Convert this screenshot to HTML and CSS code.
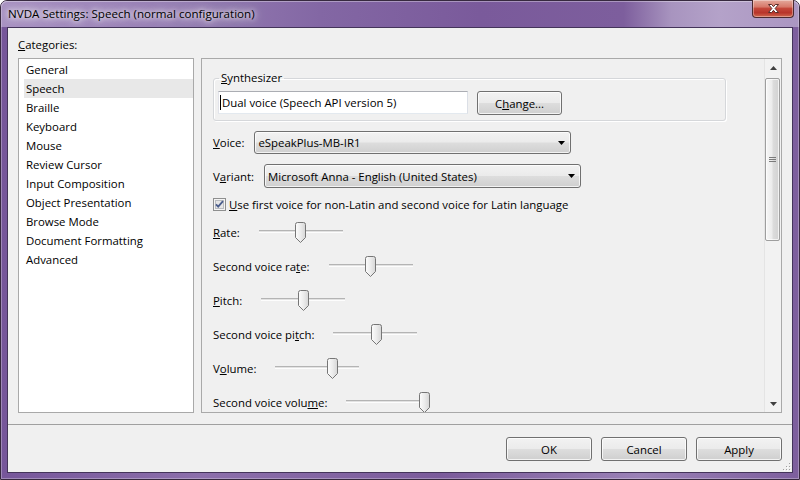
FILE: index.html
```html
<!DOCTYPE html>
<html>
<head>
<meta charset="utf-8">
<title>NVDA Settings</title>
<link rel="stylesheet" href="styles.css">
</head>
<body>
<div class="window">
  <div class="titlebar">
    <span class="title">NVDA Settings: Speech (normal configuration)</span>
    <div class="close">
      <svg width="13" height="11" viewBox="0 0 13 11"><path d="M1.5 1.5h3.2l1.8 2.2 1.8-2.2h3.2l-3.4 4 3.4 4h-3.2l-1.8-2.2-1.8 2.2h-3.2l3.4-4z" fill="#fff" stroke="#5b2e2a" stroke-width="1" stroke-linejoin="round"/></svg>
    </div>
  </div>
  <div class="client">
    <div class="main">
      <div class="cat-label"><u>C</u>ategories:</div>
      <ul class="catlist">
        <li>General</li>
        <li class="sel">Speech</li>
        <li>Braille</li>
        <li>Keyboard</li>
        <li>Mouse</li>
        <li>Review Cursor</li>
        <li>Input Composition</li>
        <li>Object Presentation</li>
        <li>Browse Mode</li>
        <li>Document Formatting</li>
        <li>Advanced</li>
      </ul>
      <div class="panel">
        <div class="panel-body">
          <fieldset class="group">
            <legend><u>S</u>ynthesizer</legend>
            <div class="synth-row">
              <div class="textbox"><span class="caret"></span>Dual voice (Speech API version 5)</div>
              <button class="btn change">C<u>h</u>ange...</button>
            </div>
          </fieldset>
          <div class="field-row voice">
            <span class="lbl"><u>V</u>oice:</span>
            <div class="combo"><span>eSpeakPlus-MB-IR1</span><svg class="arrow" width="7" height="4" viewBox="0 0 7 4"><path d="M0 0h7L3.5 4z" fill="#000"/></svg></div>
          </div>
          <div class="field-row variant">
            <span class="lbl">V<u>a</u>riant:</span>
            <div class="combo"><span>Microsoft Anna - English (United States)</span><svg class="arrow" width="7" height="4" viewBox="0 0 7 4"><path d="M0 0h7L3.5 4z" fill="#000"/></svg></div>
          </div>
          <div class="check-row">
            <span class="chk"><svg width="13" height="13" viewBox="0 0 13 13"><rect x="0.5" y="0.5" width="12" height="12" fill="#f4f4f4" stroke="#8e8f8f"/><rect x="2.5" y="2.5" width="8" height="8" fill="#e6e6e6" stroke="#b9bcc0"/><path d="M3 6.3l2.2 2.4L10 3.2" fill="none" stroke="#4a5d8c" stroke-width="1.8"/></svg></span>
            <span><u>U</u>se first voice for non-Latin and second voice for Latin language</span>
          </div>
          <div class="slider-row first">
            <span class="lbl"><u>R</u>ate:</span>
            <div class="slider"><div class="track"></div><svg class="thumb" style="--v:0.5" width="11" height="21" viewBox="0 0 11 21"><defs><linearGradient id="tg" x1="0" y1="0" x2="1" y2="0"><stop offset="0" stop-color="#fdfdfd"/><stop offset="0.5" stop-color="#ececec"/><stop offset="1" stop-color="#d6d6d6"/></linearGradient></defs><path d="M0.5 2.5Q0.5 0.5 2.5 0.5H8.5Q10.5 0.5 10.5 2.5V15.5L5.5 20.5L0.5 15.5Z" fill="url(#tg)" stroke="#767676"/></svg></div>
          </div>
          <div class="slider-row">
            <span class="lbl">Second voice ra<u>t</u>e:</span>
            <div class="slider"><div class="track"></div><svg class="thumb" style="--v:0.5" width="11" height="21" viewBox="0 0 11 21"><path d="M0.5 2.5Q0.5 0.5 2.5 0.5H8.5Q10.5 0.5 10.5 2.5V15.5L5.5 20.5L0.5 15.5Z" fill="url(#tg)" stroke="#767676"/></svg></div>
          </div>
          <div class="slider-row">
            <span class="lbl"><u>P</u>itch:</span>
            <div class="slider"><div class="track"></div><svg class="thumb" style="--v:0.5" width="11" height="21" viewBox="0 0 11 21"><path d="M0.5 2.5Q0.5 0.5 2.5 0.5H8.5Q10.5 0.5 10.5 2.5V15.5L5.5 20.5L0.5 15.5Z" fill="url(#tg)" stroke="#767676"/></svg></div>
          </div>
          <div class="slider-row">
            <span class="lbl">Second voice pi<u>t</u>ch:</span>
            <div class="slider"><div class="track"></div><svg class="thumb" style="--v:0.52" width="11" height="21" viewBox="0 0 11 21"><path d="M0.5 2.5Q0.5 0.5 2.5 0.5H8.5Q10.5 0.5 10.5 2.5V15.5L5.5 20.5L0.5 15.5Z" fill="url(#tg)" stroke="#767676"/></svg></div>
          </div>
          <div class="slider-row">
            <span class="lbl">V<u>o</u>lume:</span>
            <div class="slider"><div class="track"></div><svg class="thumb" style="--v:0.71" width="11" height="21" viewBox="0 0 11 21"><path d="M0.5 2.5Q0.5 0.5 2.5 0.5H8.5Q10.5 0.5 10.5 2.5V15.5L5.5 20.5L0.5 15.5Z" fill="url(#tg)" stroke="#767676"/></svg></div>
          </div>
          <div class="slider-row">
            <span class="lbl">Second voice volu<u>m</u>e:</span>
            <div class="slider"><div class="track"></div><svg class="thumb" style="--v:1" width="11" height="21" viewBox="0 0 11 21"><path d="M0.5 2.5Q0.5 0.5 2.5 0.5H8.5Q10.5 0.5 10.5 2.5V15.5L5.5 20.5L0.5 15.5Z" fill="url(#tg)" stroke="#767676"/></svg></div>
          </div>
        </div>
        <div class="vscroll">
          <div class="sb-btn"><svg width="7" height="4" viewBox="0 0 7 4"><path d="M0 4h7L3.5 0z" fill="#404040"/></svg></div>
          <div class="sb-thumb"><svg width="7" height="5" viewBox="0 0 7 5"><path d="M0 0.5h7M0 2.5h7M0 4.5h7" stroke="#7a7a7a" stroke-width="1"/></svg></div>
          <div class="sb-space"></div>
          <div class="sb-btn"><svg width="7" height="4" viewBox="0 0 7 4"><path d="M0 0h7L3.5 4z" fill="#404040"/></svg></div>
        </div>
      </div>
    </div>
    <div class="sep"></div>
    <div class="buttons">
      <button class="btn">OK</button>
      <button class="btn">Cancel</button>
      <button class="btn">Apply</button>
    </div>
    <svg class="grip" width="8" height="8" viewBox="0 0 8 8"><g fill="#fff"><rect x="7" y="7" width="1" height="1"/><rect x="4" y="7" width="1" height="1"/><rect x="1" y="7" width="1" height="1"/><rect x="7" y="4" width="1" height="1"/><rect x="4" y="4" width="1" height="1"/><rect x="7" y="1" width="1" height="1"/></g><g fill="#a0a0a0"><rect x="6" y="6" width="1" height="1"/><rect x="3" y="6" width="1" height="1"/><rect x="0" y="6" width="1" height="1"/><rect x="6" y="3" width="1" height="1"/><rect x="3" y="3" width="1" height="1"/><rect x="6" y="0" width="1" height="1"/></g></svg>
  </div>
</div>
</body>
</html>
```

FILE: styles.css
```css
* { box-sizing: border-box; }
html, body { margin: 0; padding: 0; }
body {
  width: 800px;
  height: 480px;
  background: #ffffff;
  font-family: "Open Sans", "Noto Sans", sans-serif;
  font-size: 11.4px;
  color: #000;
  overflow: hidden;
}
u { text-decoration: underline; text-underline-offset: 1px; text-decoration-thickness: 1px; }

.window {
  width: 800px;
  height: 480px;
  display: flex;
  flex-direction: column;
  border: 1px solid #37293f;
  border-radius: 7px 7px 0 0;
  background: linear-gradient(90deg, #76569a 0%, #8c6fab 25%, #7b5b9b 55%, #9a81b6 80%, #7d5e9d 100%);
  box-shadow: inset 0 0 0 1px rgba(255,255,255,0.3);
  position: relative;
}

.titlebar {
  height: 26px;
  flex: none;
  position: relative;
  border-radius: 6px 6px 0 0;
  background: linear-gradient(90deg, #a892c2 0%, #9880b5 20%, #8367a4 40%, #7a5a9b 60%, #7d5e9d 78%, #a894bf 84%, #b4a2c9 90%, #ab96c2 100%);
  box-shadow: inset 0 1px 0 rgba(255,255,255,0.35), inset 1px 0 0 rgba(255,255,255,0.25), inset -1px 0 0 rgba(255,255,255,0.25);
}
.title {
  display: block;
  padding-left: 7px;
  line-height: 26px;
  font-size: 11.6px;
  color: #000;
  text-shadow: 0 0 5px #fff, 0 0 9px rgba(255,255,255,0.9), 0 0 14px rgba(255,255,255,0.7);
  white-space: nowrap;
}
.close {
  position: absolute;
  top: -1px;
  right: 5px;
  width: 42px;
  height: 18px;
  border: 1px solid #4b2a30;
  border-top: none;
  border-radius: 0 0 4px 4px;
  background: linear-gradient(180deg, #e4a99c 0%, #d7796a 40%, #c4473a 50%, #b8342a 75%, #d0684f 100%);
  box-shadow: inset 0 0 0 1px rgba(255,255,255,0.35);
  display: flex;
  align-items: center;
  justify-content: center;
}

.client {
  flex: 1;
  margin: 0 6px 6px 6px;
  background: #f0f0f0;
  border: 1px solid #44345a;
  padding: 9px 10px 10px 10px;
  display: flex;
  flex-direction: column;
  position: relative;
}

.main {
  display: grid;
  grid-template-columns: 176px 581px;
  grid-template-rows: 16px 355px;
  row-gap: 5px;
  column-gap: 7px;
}
.cat-label {
  grid-column: 1;
  grid-row: 1;
  line-height: 16px;
  padding-left: 0;
}
.catlist {
  grid-column: 1;
  grid-row: 2;
  margin: 0;
  padding: 1px 0 0 0;
  list-style: none;
  background: #fff;
  border: 1px solid #a9a9a9;
}
.catlist li {
  height: 19px;
  line-height: 19px;
  margin-left: 5px;
  padding-left: 2px;
  white-space: nowrap;
}
.catlist li.sel { background: #e8e8e8; }

.panel {
  grid-column: 2;
  grid-row: 2;
  display: flex;
  border: 1px solid #a9a9a9;
  background: #f0f0f0;
  overflow: hidden;
}
.panel-body {
  flex: 1;
  padding-left: 11px;
  overflow: hidden;
}

.group {
  margin: 11px 0 0 0;
  width: 513px;
  min-width: 0;
  padding: 5px 4px 5px 4px;
  border: 1px solid #d5d7da;
  border-radius: 3px;
  box-shadow: inset 1px 1px 0 #fff, 1px 1px 0 #fff;
}
.group legend {
  padding: 0 2px;
  margin-left: 1px;
  line-height: 16px;
}
.synth-row {
  display: flex;
  gap: 9px;
  align-items: flex-start;
}
.textbox {
  width: 250px;
  height: 23px;
  background: #fff;
  border: 1px solid;
  border-color: #abadb3 #dbdfe6 #e3e9ef #e2e3ea;
  padding-left: 1px;
  display: flex;
  align-items: center;
  white-space: nowrap;
}
.caret {
  display: inline-block;
  width: 1px;
  height: 15px;
  background: #000;
  margin-right: 1px;
}

.btn {
  width: 86px;
  height: 24px;
  padding: 0;
  margin: 0;
  font-family: inherit;
  font-size: 11.4px;
  color: #000;
  border: 1px solid #707070;
  border-radius: 3px;
  background: linear-gradient(180deg, #f2f2f2 0%, #ebebeb 48%, #dddddd 52%, #cfcfcf 100%);
  box-shadow: inset 0 0 0 1px rgba(255,255,255,0.75);
  text-align: center;
}
.btn.change { width: 85px; }

.field-row {
  display: flex;
  align-items: center;
  gap: 10px;
  margin-top: 10px;
}
.combo {
  width: 317px;
  height: 23px;
  border: 1px solid #707070;
  border-radius: 3px;
  background: linear-gradient(180deg, #f2f2f2 0%, #ebebeb 48%, #dddddd 52%, #cfcfcf 100%);
  box-shadow: inset 0 0 0 1px rgba(255,255,255,0.75);
  display: flex;
  align-items: center;
  padding: 0 5px 0 3px;
  white-space: nowrap;
}
.combo .arrow { margin-left: auto; }
.variant .combo { height: 24px; }

.check-row {
  display: flex;
  align-items: center;
  gap: 3px;
  margin-top: 8px;
  height: 16px;
  white-space: nowrap;
}
.chk { display: flex; width: 13px; height: 13px; }

.slider-row {
  display: flex;
  align-items: center;
  gap: 19px;
  height: 21px;
  margin-top: 13px;
  white-space: nowrap;
}
.slider-row.first { margin-top: 10px; }
.slider {
  position: relative;
  width: 84px;
  height: 21px;
  flex: none;
}
.slider .track {
  position: absolute;
  left: 0;
  right: 0;
  top: 8px;
  height: 3px;
  border-top: 1px solid #b4b4b4;
  border-bottom: 1px solid #fdfdfd;
  background: #e2e2e2;
}
.slider .thumb {
  position: absolute;
  top: 0;
  left: calc(var(--v) * (100% - 11px));
}

.vscroll {
  width: 17px;
  flex: none;
  display: flex;
  flex-direction: column;
  background: #f2f2f2;
  border-left: 1px solid #e4e4e4;
}
.sb-btn {
  height: 17px;
  display: flex;
  align-items: center;
  justify-content: center;
}
.sb-thumb {
  margin: 2px 1px 0 0;
  height: 163px;
  border: 1px solid #9e9e9e;
  border-radius: 2px;
  background: linear-gradient(90deg, #f7f7f7 0%, #ececec 45%, #dcdcdc 55%, #d2d2d2 100%);
  box-shadow: inset 0 0 0 1px rgba(255,255,255,0.7);
  display: flex;
  align-items: center;
  justify-content: center;
}
.sb-space { flex: 1; }

.sep {
  margin: 11px -10px 0 -10px;
  border-top: 1px solid #a0a0a0;
  height: 0;
}
.buttons {
  display: flex;
  justify-content: flex-end;
  gap: 9px;
  margin-top: 12px;
}
.grip {
  position: absolute;
  right: 1px;
  bottom: 1px;
}
```
